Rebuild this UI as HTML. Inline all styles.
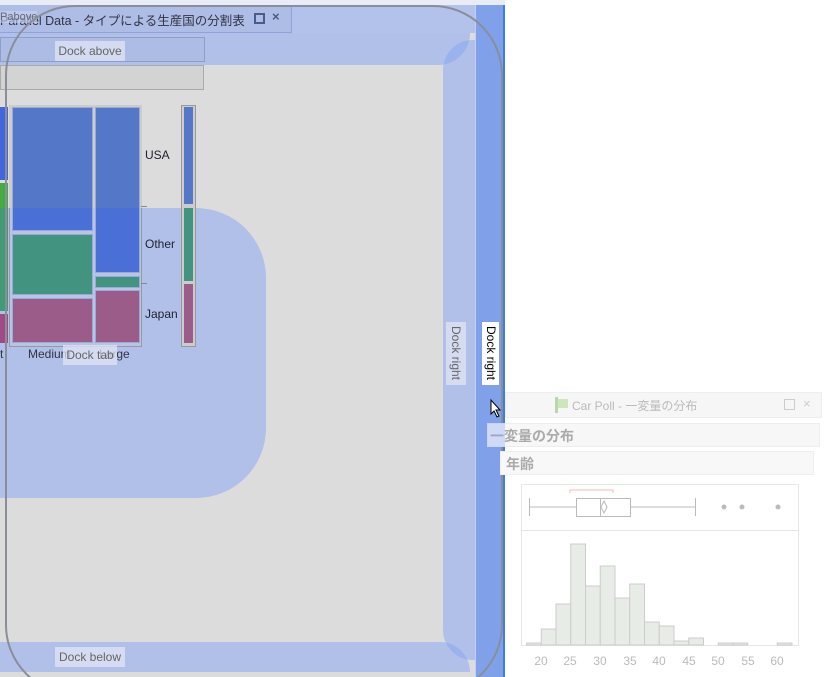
<!DOCTYPE html>
<html><head><meta charset="utf-8"><style>
*{margin:0;padding:0;box-sizing:border-box}
html,body{width:826px;height:677px;overflow:hidden}
body{position:relative;background:#fff;font-family:"Liberation Sans","Noto Sans CJK JP",sans-serif;font-size:12px}
#w{position:absolute;left:0;top:0;width:826px;height:677px;overflow:hidden}
.a{position:absolute}
.ov{position:absolute;background:rgba(132,164,244,0.5)}
.lbl{position:absolute;background:rgba(225,230,245,0.75);color:#666;font-size:12px;line-height:20px;text-align:center}
</style></head><body><div id="w">
<div class="a" style="left:0;top:0;width:505px;height:677px;background:#dcdcdc"></div>
<div class="a" style="left:0;top:0;width:505px;height:5px;background:#e8ecf6"></div>
<div class="a" style="left:0;top:5px;width:505px;height:28px;background:#b2c2ea"></div>
<div class="a" style="left:0;top:5px;width:292px;height:28px;background:#aebde6;border-right:1px solid #8fa3d8;border-bottom:1px solid #8fa3d8"></div>
<div class="a" style="left:0;top:10px;color:#334;font-size:12.5px;white-space:nowrap">Parallel Data - タイプによる生産国の分割表</div>
<div class="a" style="left:0;top:11px;color:#667;font-size:11px;background:rgba(200,210,240,.6)">Pabove</div>
<div class="a" style="left:254px;top:13px;width:11px;height:11px;border:2px solid #4a5a8a"></div>
<div class="a" style="left:272px;top:9px;color:#4a5a8a;font-size:13px;font-weight:bold">×</div>
<div class="a" style="left:492px;top:14px;width:0;height:0;border-left:5px solid transparent;border-right:5px solid transparent;border-top:7px solid #6078c8"></div>
<div class="a" style="left:0;top:37px;width:205px;height:25px;border:1px solid #999;background:#d5d5d5"></div>
<div class="a" style="left:0;top:65px;width:204px;height:25px;border:1px solid #aaa;background:#d3d3d3"></div>
<div class="ov" style="left:0;top:33px;width:470px;height:32px;border-radius:0 0 40px 0"></div>
<div class="ov" style="left:443px;top:40px;width:32px;height:620px;border-radius:30px 0 0 30px"></div>
<div class="ov" style="left:0;top:642px;width:470px;height:30px;border-radius:0 30px 0 0"></div>
<div class="ov" style="left:0;top:208px;width:266px;height:290px;border-radius:0 70px 70px 0"></div>
<div class="a" style="left:9px;top:105px;width:133px;height:242px;border:1px solid #999;background:#b8c4e4"></div>
<div class="a" style="left:9px;top:105px;width:133px;height:103px;background:#ccc"></div>
<div class="a" style="left:0;top:107px;width:8px;height:73px;background:#4466dd"></div>
<div class="a" style="left:0;top:183px;width:8px;height:128px;background:#449977"></div>
<div class="a" style="left:0;top:183px;width:8px;height:25px;background:#44aa44"></div>
<div class="a" style="left:0;top:314px;width:8px;height:29px;background:#a04a88"></div>
<div class="a" style="left:12px;top:107px;width:81px;height:124px;background:linear-gradient(#5577c8 0,#5577c8 100px,#4a70d8 100px);border:1px solid #9aaad8"></div>
<div class="a" style="left:12px;top:234px;width:81px;height:61px;background:#42937f;border:1px solid #9aaad8"></div>
<div class="a" style="left:12px;top:298px;width:81px;height:45px;background:#9c5c8a;border:1px solid #9aaad8"></div>
<div class="a" style="left:95px;top:107px;width:45px;height:166px;background:linear-gradient(#5577c8 0,#5577c8 100px,#4a70d8 100px);border:1px solid #9aaad8"></div>
<div class="a" style="left:95px;top:276px;width:45px;height:12px;background:#42937f;border:1px solid #9aaad8"></div>
<div class="a" style="left:95px;top:290px;width:45px;height:53px;background:#9c5c8a;border:1px solid #9aaad8"></div>
<div class="a" style="left:141px;top:206px;width:6px;height:1px;background:#888"></div>
<div class="a" style="left:141px;top:283px;width:6px;height:1px;background:#888"></div>
<div class="a" style="left:181px;top:105px;width:15px;height:242px;border:1px solid #999;background:#ccc"></div>
<div class="a" style="left:184px;top:107px;width:9px;height:97px;background:#5577c8"></div>
<div class="a" style="left:184px;top:208px;width:9px;height:73px;background:#42937f"></div>
<div class="a" style="left:184px;top:284px;width:9px;height:59px;background:#9c5c8a"></div>
<div class="a" style="left:145px;top:148px;color:#223">USA</div>
<div class="a" style="left:145px;top:237px;color:#223">Other</div>
<div class="a" style="left:145px;top:307px;color:#223">Japan</div>
<div class="a" style="left:0;top:347px;color:#334">t</div>
<div class="a" style="left:28px;top:347px;color:#334">Medium</div>
<div class="a" style="left:99px;top:347px;color:#334">Large</div>
<div class="a" style="left:475px;top:5px;width:30px;height:672px;background:#80a0ea;border-left:1px solid #c0d0f4;border-right:2px solid #3b80e0"></div>
<div class="lbl" style="left:55px;top:41px;width:70px">Dock above</div>
<div class="lbl" style="left:55px;top:647px;width:70px">Dock below</div>
<div class="lbl" style="left:63px;top:345px;width:54px">Dock tab</div>
<div class="lbl" style="left:446px;top:322px;width:20px;height:63px;writing-mode:vertical-rl;line-height:20px">Dock right</div>
<div class="a" style="left:482px;top:322px;width:17px;height:63px;background:#fff;color:#000;writing-mode:vertical-rl;line-height:17px;text-align:center">Dock right</div>
<div class="a" style="left:5px;top:5px;width:498px;height:690px;border:2px solid #8a8e9a;border-radius:70px"></div>
<div class="a" style="left:505px;top:392px;width:317px;height:26px;background:#f6f6f6;border:1px solid #eee"></div>
<div class="a" style="left:555px;top:397px;width:3px;height:16px;background:#b8d8a8"></div>
<div class="a" style="left:558px;top:399px;width:10px;height:9px;background:#cde6c0"></div>
<div class="a" style="left:572px;top:397px;color:#bbb;font-size:12px">Car Poll - 一変量の分布</div>
<div class="a" style="left:784px;top:399px;width:11px;height:11px;border:1px solid #ccc"></div>
<div class="a" style="left:803px;top:396px;color:#ccc;font-size:13px">×</div>
<div class="a" style="left:487px;top:423px;width:333px;height:24px;background:#f7f7f7;border:1px solid #eee"></div>
<div class="a" style="left:490px;top:426px;color:#aaa;font-size:14px;font-weight:bold">一変量の分布</div>
<div class="a" style="left:500px;top:451px;width:314px;height:24px;background:#f8f8f8;border:1px solid #eee"></div>
<div class="a" style="left:506px;top:454px;color:#aaa;font-size:14px;font-weight:bold">年齢</div>
<div class="ov" style="left:487px;top:423px;width:18px;height:24px;background:rgba(132,164,244,0.35)"></div>
<svg class="a" style="left:0;top:0" width="826" height="677">
<rect x="521.5" y="484.5" width="277" height="161" fill="#fff" stroke="#e6e6e6"/>
<line x1="522" y1="530.5" x2="798" y2="530.5" stroke="#e6e6e6"/>
<path d="M570 493V490H613V493" fill="none" stroke="#f4b8b8"/>
<g stroke="#bbb" fill="none">
<line x1="529" y1="507" x2="576" y2="507"/><line x1="630" y1="507" x2="695" y2="507"/>
<line x1="529.5" y1="498" x2="529.5" y2="516"/><line x1="695.5" y1="498" x2="695.5" y2="516"/>
<rect x="576.5" y="498.5" width="54" height="18" fill="#fff"/><line x1="600.5" y1="498" x2="600.5" y2="516"/>
<path d="M604 501L607 507L604 513L601 507Z"/>
</g>
<g fill="#bbb"><circle cx="724" cy="507" r="2.5"/><circle cx="742" cy="507" r="2.5"/><circle cx="778" cy="507" r="2.5"/></g>
<g fill="#e8ece6" stroke="#ccc">
<rect x="526.5" y="643" width="14.75" height="2"/>
<rect x="541.25" y="629" width="14.75" height="16"/>
<rect x="556" y="604" width="14.75" height="41"/>
<rect x="570.75" y="544" width="14.75" height="101"/>
<rect x="585.5" y="586" width="14.75" height="59"/>
<rect x="600.25" y="566" width="14.75" height="79"/>
<rect x="615" y="598" width="14.75" height="47"/>
<rect x="629.75" y="584" width="14.75" height="61"/>
<rect x="644.5" y="622" width="14.75" height="23"/>
<rect x="659.25" y="626" width="14.75" height="19"/>
<rect x="674" y="641" width="14.75" height="4"/>
<rect x="688.75" y="638" width="14.75" height="7"/>
<rect x="718.25" y="643" width="14.75" height="2"/>
<rect x="733" y="643" width="14.75" height="2"/>
<rect x="777.25" y="643" width="14.75" height="2"/>
</g>
<g fill="#bbb" font-size="12" font-family="Liberation Sans" text-anchor="middle">
<text x="541" y="665">20</text><text x="570" y="665">25</text><text x="600" y="665">30</text><text x="630" y="665">35</text><text x="659" y="665">40</text><text x="689" y="665">45</text><text x="718" y="665">50</text><text x="748" y="665">55</text><text x="777" y="665">60</text>
</g>
<path d="M491 400V414L494 411L497 417L499 416L496 410H500Z" fill="#fff" stroke="#000"/>
</svg>
</div></body></html>
